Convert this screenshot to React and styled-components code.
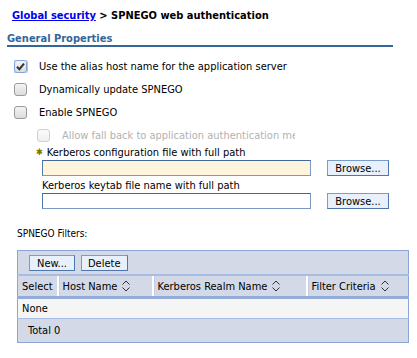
import React from "react";
import styled, { createGlobalStyle } from "styled-components";

const GlobalStyle = createGlobalStyle`
  body {
    margin: 0;
    background: #ffffff;
    font-family: "DejaVu Sans Condensed", "DejaVu Sans", Verdana, sans-serif;
    font-stretch: condensed;
    font-size: 11px;
    color: #000000;
  }
`;

const Page = styled.div`
  width: 417px;
  height: 358px;
  overflow: hidden;
  padding-top: 9px;
  box-sizing: border-box;
`;

const Breadcrumb = styled.div`
  padding-left: 12px;
  font-weight: bold;
  line-height: 14px;
  a {
    color: #0000ee;
    text-decoration: underline;
  }
`;

const SectionTitle = styled.div`
  margin: 9px 0 0 7px;
  width: 386px;
  color: #336699;
  font-weight: bold;
  line-height: 13px;
  border-bottom: 2px solid #336699;
`;

const Options = styled.div`
  padding: 13px 0 0 14px;
  display: flex;
  flex-direction: column;
  gap: 10px;
`;

const OptionRow = styled.label`
  display: flex;
  align-items: center;
  gap: 12px;
  height: 13px;
  padding-left: ${(p) => (p.$indent ? "23px" : "0")};
  color: ${(p) => (p.$disabled ? "#b2b2b2" : "#000")};
  white-space: nowrap;
  overflow: hidden;
  width: ${(p) => (p.$indent ? "258px" : "auto")};
`;

const Box = styled.span`
  flex: none;
  width: 11px;
  height: 11px;
  border-radius: 3px;
  border: 1px solid ${(p) => (p.$focus ? "#7ea6d8" : p.$disabled ? "#d0d0d0" : "#9a9a9a")};
  box-shadow: ${(p) => (p.$focus ? "0 0 0 1px #a9c4ea" : "none")};
  background: ${(p) =>
    p.$disabled
      ? "linear-gradient(#fbfbfb, #f0f0f0)"
      : "linear-gradient(#f4f4f4, #dcdcdc)"};
  display: flex;
  align-items: center;
  justify-content: center;
`;

const Fields = styled.div`
  padding: 4px 0 0 36px;
`;

const FieldLabel = styled.div`
  line-height: 13px;
  padding-left: ${(p) => (p.$required ? "0" : "6px")};
  margin-top: ${(p) => (p.$gap ? "3px" : "0")};
`;

const Star = styled.span`
  color: #7a7400;
  font-size: 9px;
  margin-right: 4px;
  vertical-align: 1px;
`;

const FieldRow = styled.div`
  display: flex;
  align-items: center;
  gap: 16px;
  padding-left: 6px;
  margin-top: 1px;
`;

const TextInput = styled.input`
  width: 269px;
  height: 16px;
  box-sizing: border-box;
  margin: 0;
  border: 1px solid #7a9ac2;
  border-top-color: #3f6a9b;
  border-left-color: #4f79a8;
  background: ${(p) => (p.$required ? "#fff5dc" : "#ffffff")};
`;

const Button = styled.button`
  font: inherit;
  color: #000;
  height: 16px;
  min-width: ${(p) => p.$min || "auto"};
  padding: 0 6px;
  line-height: 13px;
  box-sizing: border-box;
  border: 1px solid #4f77aa;
  border-left-color: #7a9ccc;
  border-top-color: #7a9ccc;
  background: #e8f0fc;
  margin: 0;
  cursor: pointer;
`;

const FiltersLabel = styled.div`
  margin: 19px 0 0 17px;
  font-size: 10px;
  line-height: 12px;
`;

const Table = styled.table`
  margin: 10px 0 0 17px;
  width: 392px;
  border-collapse: collapse;
  border: 1px solid #8aa5d6;
  background: #d3d9e7;
  table-layout: fixed;
`;

const ToolbarCell = styled.td`
  padding: 4px 0 3px 11px;
  border-bottom: 2px solid #a6bce2;
  height: 16px;
  & > button + button {
    margin-left: 6px;
  }
`;

const HeadCell = styled.th`
  text-align: left;
  font-weight: normal;
  height: 20px;
  padding: 0 4px;
  white-space: nowrap;
  border-left: 2px solid #ffffff;
  border-bottom: 3px solid #94acd8;
  box-shadow: inset 1px 0 0 #c3cfe6;
  &:first-child {
    border-left: none;
    box-shadow: none;
  }
  svg {
    vertical-align: -3px;
    margin-left: 4px;
  }
`;

const EmptyCell = styled.td`
  background: #f5f5f5;
  height: 19px;
  padding: 0 4px;
  border-bottom: 1px solid #a6bce2;
`;

const TotalCell = styled.td`
  height: 23px;
  padding: 0 0 0 10px;
`;

function CheckMark() {
  return (
    <svg width="9" height="9" viewBox="0 0 9 9">
      <path d="M1 4.8 L3.4 7.2 L8 1.6" fill="none" stroke="#333" strokeWidth="2" />
    </svg>
  );
}

function SortIcon() {
  return (
    <svg width="10" height="14" viewBox="0 0 10 14">
      <path d="M1.5 5.5 L5 2 L8.5 5.5 M1.5 8.5 L5 12 L8.5 8.5" fill="none" stroke="#333" strokeWidth="1" />
    </svg>
  );
}

function Option({ label, checked, focus, disabled, indent }) {
  return (
    <OptionRow $disabled={disabled} $indent={indent}>
      <Box $focus={focus} $disabled={disabled}>
        {checked && <CheckMark />}
      </Box>
      {label}
    </OptionRow>
  );
}

export default function App() {
  return (
    <Page>
      <GlobalStyle />
      <Breadcrumb>
        <a href="#">Global security</a> &gt; SPNEGO web authentication
      </Breadcrumb>
      <SectionTitle>General Properties</SectionTitle>
      <Options>
        <Option label="Use the alias host name for the application server" checked focus />
        <Option label="Dynamically update SPNEGO" />
        <Option label="Enable SPNEGO" />
        <Option label="Allow fall back to application authentication mechanism" disabled indent />
      </Options>
      <Fields>
        <FieldLabel $required>
          <Star>✱</Star>Kerberos configuration file with full path
        </FieldLabel>
        <FieldRow>
          <TextInput $required />
          <Button $min="62px">Browse...</Button>
        </FieldRow>
        <FieldLabel $gap>Kerberos keytab file name with full path</FieldLabel>
        <FieldRow>
          <TextInput />
          <Button $min="62px">Browse...</Button>
        </FieldRow>
      </Fields>
      <FiltersLabel>SPNEGO Filters:</FiltersLabel>
      <Table>
        <colgroup>
          <col style={{ width: 40 }} />
          <col style={{ width: 95 }} />
          <col style={{ width: 154 }} />
          <col />
        </colgroup>
        <tbody>
          <tr>
            <ToolbarCell colSpan={4}>
              <Button $min="46px">New...</Button>
              <Button $min="46px">Delete</Button>
            </ToolbarCell>
          </tr>
          <tr>
            <HeadCell>Select</HeadCell>
            <HeadCell>
              Host Name
              <SortIcon />
            </HeadCell>
            <HeadCell>
              Kerberos Realm Name
              <SortIcon />
            </HeadCell>
            <HeadCell>
              Filter Criteria
              <SortIcon />
            </HeadCell>
          </tr>
          <tr>
            <EmptyCell colSpan={4}>None</EmptyCell>
          </tr>
          <tr>
            <TotalCell colSpan={4}>Total 0</TotalCell>
          </tr>
        </tbody>
      </Table>
    </Page>
  );
}
